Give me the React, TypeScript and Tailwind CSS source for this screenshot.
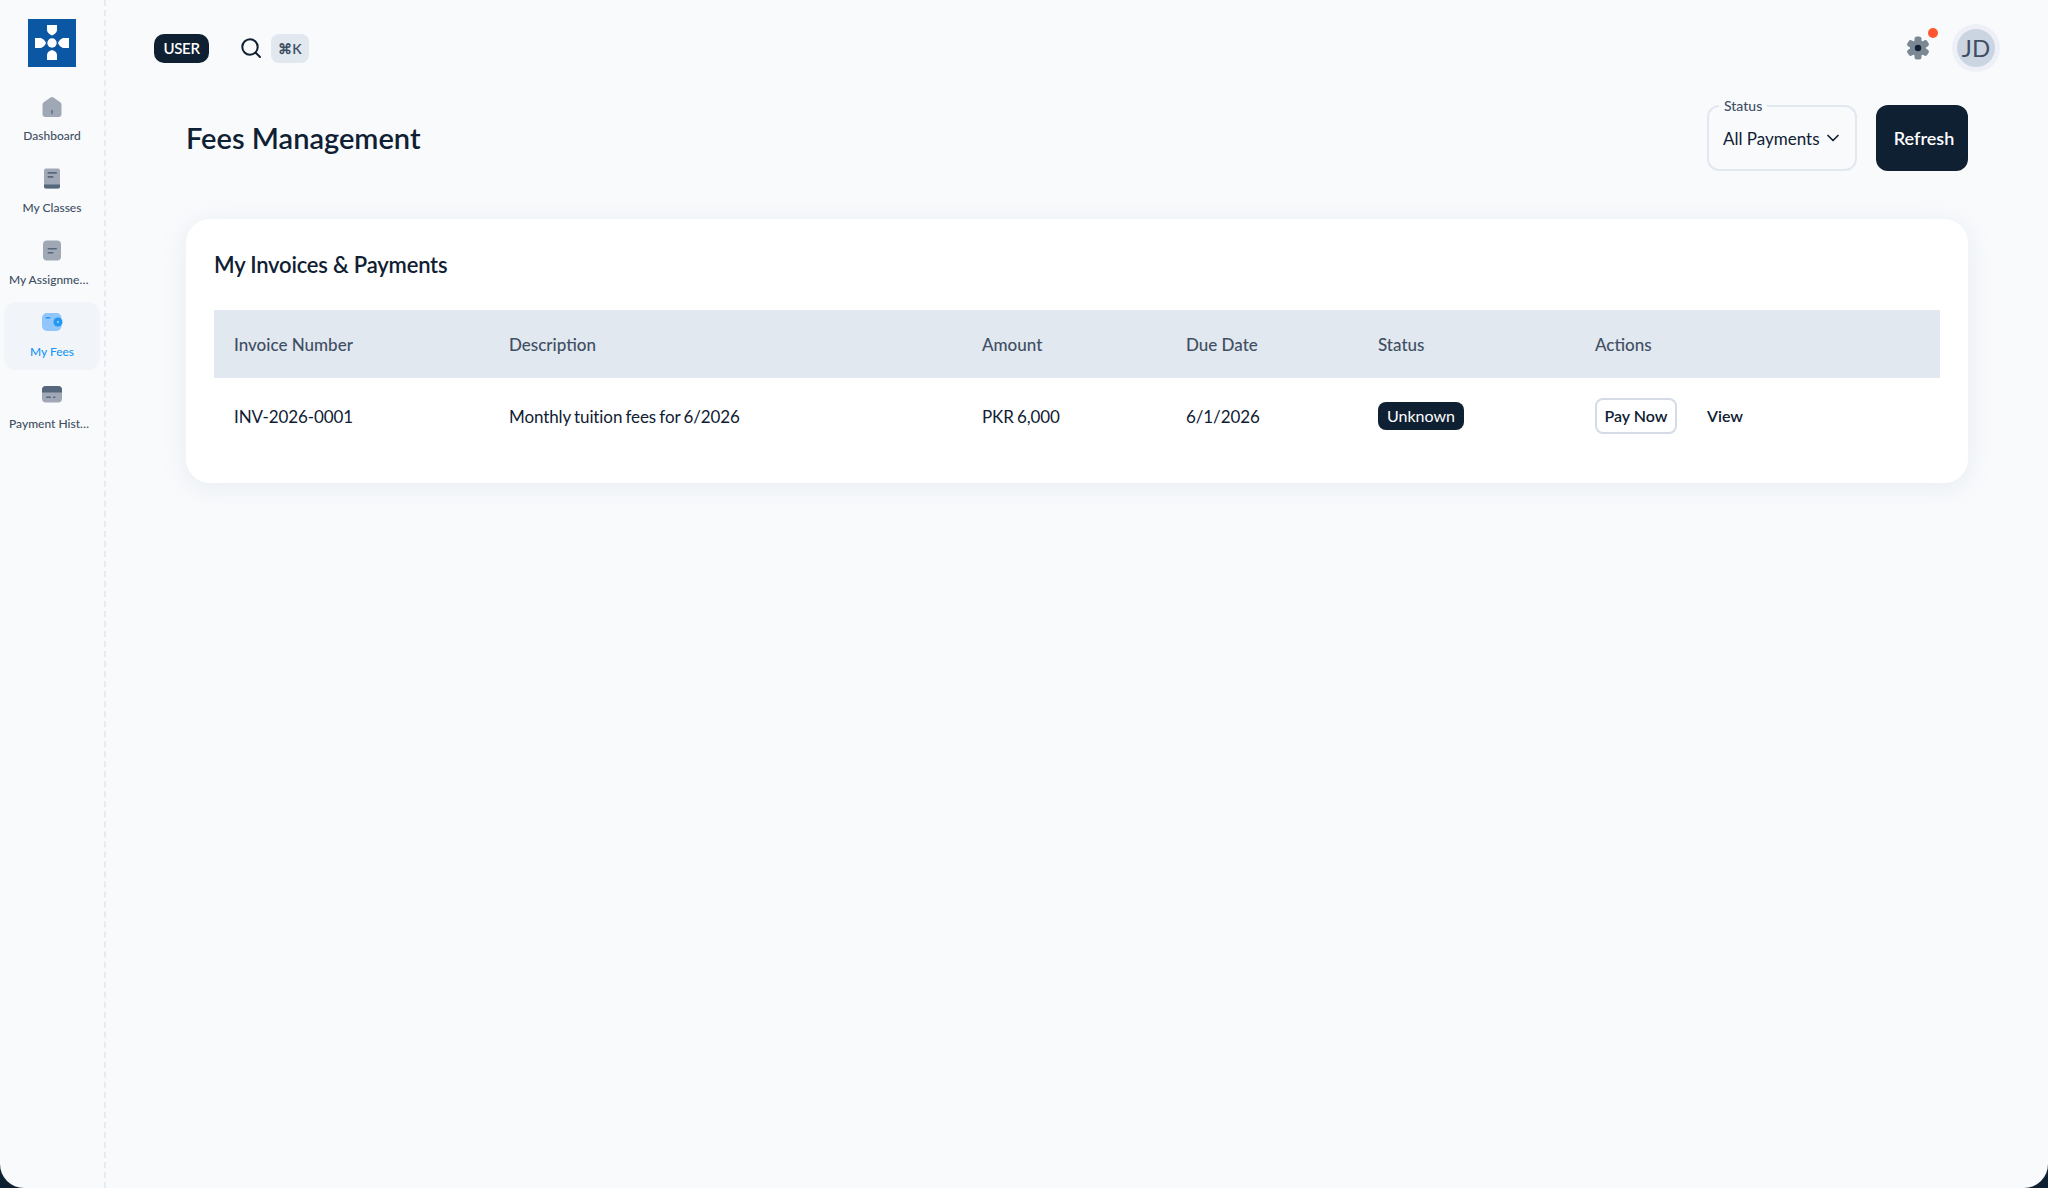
import { ChevronDown } from "lucide-react"

const font = { fontFamily: "Lato, 'Liberation Sans', sans-serif" }

function Logo() {
  return (
    <svg viewBox="0 0 48 48" className="w-12 h-12 block">
      <rect width="48" height="48" fill="#0b57a4" />
      <circle cx="24" cy="24" r="4.700" fill="#fff" />
      <path d="M19 6h10v5c0 2.500-2.500 4.500-5 5.500-2.500-1-5-3-5-5.500z" fill="#fff" />
      <path d="M19 41h10v-5c0-2.500-2.200-4.500-5-5-2.800.5-5 2.500-5 5z" fill="#fff" />
      <path d="M7 19h5c2.500 0 5 2.500 6 5-1 2.500-3.500 5-6 5H7z" fill="#fff" />
      <path d="M41 19h-5c-2.500 0-5 2.500-6 5 1 2.500 3.500 5 6 5h5z" fill="#fff" />
    </svg>
  )
}

function HomeIcon() {
  return (
    <svg viewBox="0 0 24 24" className="w-6 h-6">
      <path d="M10.200 2.700a3 3 0 0 1 3.600 0l6.500 4.600c.800.600 1.200 1.400 1.200 2.400v9.300a3 3 0 0 1-3 3H5.500a3 3 0 0 1-3-3V9.700c0-1 .400-1.800 1.200-2.400z" fill="#a0a8b5" />
      <rect x="11.200" y="15" width="1.600" height="4" rx=".6" fill="#5f6f84" />
    </svg>
  )
}

function BookIcon() {
  return (
    <svg viewBox="0 0 24 24" className="w-6 h-6">
      <rect x="4" y="1.500" width="16" height="20" rx="2" fill="#a0a8b5" />
      <path d="M4 17.500h16v2a2 2 0 0 1-2 2H6a2 2 0 0 1-2-2z" fill="#56667b" />
      <rect x="7.500" y="5" width="9.500" height="1.700" rx=".8" fill="#56667b" />
      <rect x="7.500" y="9" width="6" height="1.700" rx=".8" fill="#56667b" />
    </svg>
  )
}

function NoteIcon() {
  return (
    <svg viewBox="0 0 24 24" className="w-6 h-6">
      <rect x="3" y="1.500" width="18" height="20" rx="4" fill="#a0a8b5" />
      <rect x="7.500" y="9" width="9.500" height="1.500" rx=".7" fill="#56667b" />
      <rect x="7.500" y="13" width="6" height="1.500" rx=".7" fill="#56667b" />
    </svg>
  )
}

function WalletIcon() {
  return (
    <svg viewBox="0 0 24 24" className="w-6 h-6">
      <rect x="2" y="2" width="19.500" height="18" rx="5" fill="#90c6fb" />
      <rect x="5.500" y="6" width="5" height="1.500" rx=".7" fill="#2196f3" />
      <circle cx="18" cy="11" r="4.500" fill="#2196f3" />
      <circle cx="18" cy="11" r="1.200" fill="#90c6fb" />
    </svg>
  )
}

function CardIcon() {
  return (
    <svg viewBox="0 0 24 24" className="w-6 h-6">
      <rect x="2" y="3" width="20" height="16.500" rx="4" fill="#a0a8b5" />
      <path d="M2 9.500V7a4 4 0 0 1 4-4h12a4 4 0 0 1 4 4v2.500z" fill="#56667b" />
      <rect x="6" y="13.500" width="5" height="1.500" rx=".7" fill="#56667b" />
      <rect x="13" y="13.500" width="2.500" height="1.500" rx=".7" fill="#56667b" />
    </svg>
  )
}

function SearchIcon() {
  return (
    <svg viewBox="0 0 24 24" className="w-6 h-6" fill="none" stroke="#0f2033" strokeWidth="2" strokeLinecap="round">
      <circle cx="11" cy="11" r="7.700" />
      <path d="M17 17l4 4" />
    </svg>
  )
}

function GearIcon() {
  return (
    <svg viewBox="0 0 24 24" className="w-6 h-6 block">
      <circle cx="12" cy="12" r="8" fill="#7c8794" />
      {[0, 60, 120, 180, 240, 300].map((deg) => (
        <rect key={deg} x="8.500" y="0.500" width="7" height="7" rx="2.500" fill="#7c8794" transform={`rotate(${deg} 12 12)`} />
      ))}
      <circle cx="12" cy="12" r="3.200" fill="#0f2033" />
    </svg>
  )
}

const navItems = [
  { label: "Dashboard", icon: <HomeIcon /> },
  { label: "My Classes", icon: <BookIcon /> },
  { label: "My Assignments", icon: <NoteIcon /> },
  { label: "My Fees", icon: <WalletIcon />, active: true },
  { label: "Payment History", icon: <CardIcon /> },
]

const columns = [
  { label: "Invoice Number", width: "w-[275px]" },
  { label: "Description", width: "w-[473px]" },
  { label: "Amount", width: "w-[204px]" },
  { label: "Due Date", width: "w-[192px]" },
  { label: "Status", width: "w-[217px]" },
  { label: "Actions", width: "" },
]

export default function App() {
  return (
    <div className="h-[1188px] overflow-hidden bg-[#0f2033]" style={font}>
      <div className="h-full flex bg-[#f8fafc] rounded-b-[24px] text-[#0f2033]">
        <aside className="w-[106px] shrink-0 border-r-2 border-dashed border-[#e6eaf2] flex flex-col items-center pt-[19px]">
          <Logo />
          <nav className="mt-[19px] flex flex-col gap-[4px] w-[96px]">
            {navItems.map((item) => (
              <div
                key={item.label}
                className={`h-[68px] flex flex-col items-center pt-[9px] rounded-xl ${item.active ? "bg-[#f1f5f9] text-[#2196f3]" : "text-[#3f4f63]"}`}
              >
                {item.icon}
                <span className="mt-[8px] w-full px-[5px] text-center text-[12px] leading-[18px] font-medium truncate">
                  {item.label}
                </span>
              </div>
            ))}
          </nav>
        </aside>

        <div className="flex-1 min-w-0">
          <header className="flex items-center h-[96px] pl-[48px] pr-[48px]">
            <span className="h-[29px] w-[55px] flex items-center justify-center rounded-[10px] bg-[#0f2033] text-white text-[15px] tracking-[-0.3px] font-semibold">
              USER
            </span>
            <span className="ml-[30px]"><SearchIcon /></span>
            <span className="ml-[8px] h-[29px] w-[38px] flex items-center justify-center rounded-lg bg-[#e2e8f0] text-[#3f4f63] text-[14px] font-semibold">
              ⌘K
            </span>
            <div className="ml-auto relative">
              <GearIcon />
              <span className="absolute -top-[8px] -right-[8px] w-[10px] h-[10px] rounded-full bg-[#ff5630]" />
            </div>
            <div className="ml-[22px] w-[48px] h-[48px] rounded-full border-[5px] border-[#edf1f7] bg-[#cbd5e1] flex items-center justify-center text-[#3f4f63] text-[24px]">
              JD
            </div>
          </header>

          <main className="pl-[80px] pr-[80px]">
            <div className="flex items-center h-[66px] mt-[9px]">
              <h1 className="text-[29px] font-semibold leading-none pb-[2px]">Fees Management</h1>
              <div className="ml-auto relative w-[150px] h-[66px] rounded-xl border-2 border-[#e2e8f0] flex items-center justify-between pl-[14px] pr-[12px] text-[17px] whitespace-nowrap">
                <span className="absolute -top-[10px] left-[10px] bg-[#f8fafc] px-[5px] text-[14px] leading-[18px] font-medium text-[#3f4f63]">
                  Status
                </span>
                <span className="pt-[2px]">All Payments</span>
                <ChevronDown className="w-5 h-5 shrink-0" strokeWidth={2} />
              </div>
              <button className="ml-[19px] w-[92px] h-[66px] rounded-xl bg-[#0f2033] text-white text-[18px] font-semibold pl-[4px]">
                Refresh
              </button>
            </div>

            <section className="mt-[48px] h-[264px] rounded-[24px] bg-white shadow-[0_4px_24px_rgba(148,163,184,0.16)] px-[28px] pt-[30px]">
              <h2 className="text-[22px] leading-[32px] font-semibold tracking-[-0.2px]">My Invoices &amp; Payments</h2>
              <table className="mt-[29px] w-full table-fixed border-collapse text-left">
                <thead>
                  <tr className="h-[68px] bg-[#e2e8f0] text-[#3f4f63]">
                    {columns.map((col) => (
                      <th key={col.label} className={`pl-[20px] pt-[2px] text-[17px] font-medium ${col.width}`}>{col.label}</th>
                    ))}
                  </tr>
                </thead>
                <tbody>
                  <tr className="h-[76px] text-[17px] tracking-[-0.1px] [word-spacing:-1px]">
                    <td className="pl-[20px] pt-[2px]">INV-2026-0001</td>
                    <td className="pl-[20px] pt-[2px]">Monthly tuition fees for 6/2026</td>
                    <td className="pl-[20px] pt-[2px]">PKR 6,000</td>
                    <td className="pl-[20px] pt-[2px]">6/1/2026</td>
                    <td className="pl-[20px]">
                      <span className="inline-flex items-center h-[28px] px-[9px] rounded-lg bg-[#0f2033] text-white text-[16px] font-normal tracking-normal">Unknown</span>
                    </td>
                    <td className="pl-[20px]">
                      <div className="flex items-center tracking-normal">
                        <button className="h-[36px] w-[82px] rounded-lg border-2 border-[#d5dce8] text-[16px] font-semibold">Pay Now</button>
                        <button className="ml-[30px] text-[16px] font-semibold">View</button>
                      </div>
                    </td>
                  </tr>
                </tbody>
              </table>
            </section>
          </main>
        </div>
      </div>
    </div>
  )
}
